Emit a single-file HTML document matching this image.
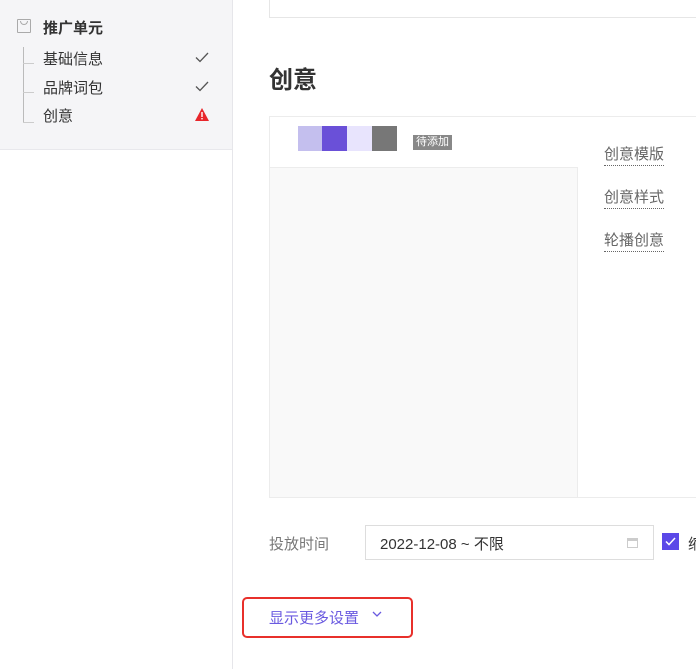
<!DOCTYPE html>
<html><head><meta charset="utf-8"><style>
*{margin:0;padding:0;box-sizing:border-box}
body{width:696px;height:669px;overflow:hidden;background:#fff;font-family:"Liberation Sans","Noto Sans CJK SC",sans-serif;position:relative}
.a{position:absolute}
.side{left:0;top:0;width:232px;height:150px;background:#f5f5f7;border-bottom:1px solid #e8e8ec}
.vline{left:232px;top:0;width:1px;height:669px;background:#e6e6ea}
.item{font-size:15px;color:#333;left:43px}
.lbl{left:604px;font-size:15px;color:#666;border-bottom:1px dotted #666;line-height:20px}
</style></head><body>
<div class="a side"></div>
<div class="a vline"></div>
<div class="a" style="left:17px;top:19px;width:14px;height:14px;border:1px solid #aaa;border-radius:1px"></div>
<div class="a" style="left:20px;top:21px;width:8px;height:4px;border:1px solid #aaa;border-top:none;border-radius:0 0 4px 4px"></div>
<div class="a" style="left:43px;top:17px;font-size:15px;font-weight:bold;color:#333">推广单元</div>
<div class="a" style="left:23px;top:47px;width:1px;height:76px;background:#bbb"></div>
<div class="a" style="left:23px;top:63px;width:11px;height:1px;background:#ccc"></div>
<div class="a" style="left:23px;top:92px;width:11px;height:1px;background:#ccc"></div>
<div class="a" style="left:23px;top:122px;width:11px;height:1px;background:#ccc"></div>
<div class="a item" style="top:48px">基础信息</div>
<div class="a item" style="top:77px">品牌词包</div>
<div class="a item" style="top:105px">创意</div>
<svg class="a" style="left:195px;top:52px" width="14" height="11"><path d="M1 5.5L5 9.5L13 1" stroke="#555" stroke-width="1.3" fill="none"/></svg>
<svg class="a" style="left:195px;top:81px" width="14" height="11"><path d="M1 5.5L5 9.5L13 1" stroke="#555" stroke-width="1.3" fill="none"/></svg>
<svg class="a" style="left:195px;top:108px" width="14" height="13"><path d="M7 0L14 13H0Z" fill="#e8262b"/><rect x="6.3" y="4" width="1.4" height="5" fill="#fff"/><rect x="6.3" y="10" width="1.4" height="1.4" fill="#fff"/></svg>
<div class="a" style="left:269px;top:-1px;width:440px;height:19px;border:1px solid #e6e6e6"></div>
<div class="a" style="left:269px;top:60px;font-size:24px;font-weight:bold;color:#333">创意</div>
<div class="a" style="left:269px;top:116px;width:440px;height:382px;border:1px solid #ececec"></div>
<div class="a" style="left:269px;top:167px;width:309px;height:331px;background:#f9f9f9;border:1px solid #ececec"></div>
<div class="a" style="left:298px;top:126px;width:25px;height:25px;background:#c4bfee"></div>
<div class="a" style="left:322px;top:126px;width:25px;height:25px;background:#6a50d8"></div>
<div class="a" style="left:347px;top:126px;width:25px;height:25px;background:#e8e4fd"></div>
<div class="a" style="left:372px;top:126px;width:25px;height:25px;background:#777"></div>
<div class="a" style="left:413px;top:135px;width:39px;height:15px;background:#888;color:#fff;font-size:11px;line-height:15px;text-align:center">待添加</div>
<div class="a lbl" style="top:145px">创意模版</div>
<div class="a lbl" style="top:188px">创意样式</div>
<div class="a lbl" style="top:231px">轮播创意</div>
<div class="a" style="left:269px;top:533px;font-size:15px;color:#777">投放时间</div>
<div class="a" style="left:365px;top:525px;width:289px;height:35px;border:1px solid #ddd;font-size:15px;color:#333;padding:7px 0 0 14px">2022-12-08 ~ 不限</div>
<div class="a" style="left:627px;top:538px;width:11px;height:10px;border:1px solid #ccc;border-top-width:3px"></div>
<div class="a" style="left:662px;top:533px;width:17px;height:17px;background:#5b48e8"></div>
<svg class="a" style="left:665px;top:537px" width="11" height="9"><path d="M1 4.5L4 7.5L10 1" stroke="#fff" stroke-width="1.5" fill="none"/></svg>
<div class="a" style="left:688px;top:533px;font-size:15px;color:#333">缩</div>
<div class="a" style="left:242px;top:597px;width:171px;height:41px;border:2px solid #e8302b;border-radius:5px"></div>
<div class="a" style="left:269px;top:607px;font-size:15px;color:#6a5ae0">显示更多设置</div>
<svg class="a" style="left:372px;top:611px" width="10" height="7"><path d="M1 1L5 5L9 1" stroke="#6a5ae0" stroke-width="1.3" fill="none"/></svg>
</body></html>
